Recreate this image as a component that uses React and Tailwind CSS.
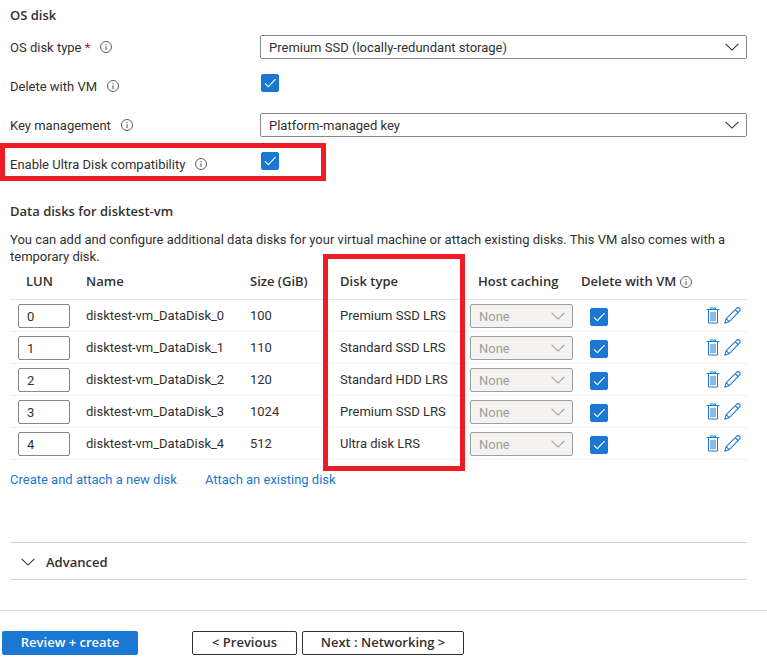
import { useState } from "react";
import { clsx } from "clsx";

const initialDisks = [
  { lun: 0, name: "disktest-vm_DataDisk_0", size: 100, type: "Premium SSD LRS" },
  { lun: 1, name: "disktest-vm_DataDisk_1", size: 110, type: "Standard SSD LRS" },
  { lun: 2, name: "disktest-vm_DataDisk_2", size: 120, type: "Standard HDD LRS" },
  { lun: 3, name: "disktest-vm_DataDisk_3", size: 1024, type: "Premium SSD LRS" },
  { lun: 4, name: "disktest-vm_DataDisk_4", size: 512, type: "Ultra disk LRS" },
];

const InfoIcon = () => (
  <svg viewBox="0 0 12 12" className="w-3 h-3 shrink-0 text-[#605e5c]" fill="none" stroke="currentColor">
    <circle cx="6" cy="6" r="5.5" strokeWidth="1" />
    <path d="M6 5.2v3.8M6 3v1.2" strokeWidth="1.1" />
  </svg>
);

const ChevronIcon = ({ className }) => (
  <svg viewBox="0 0 14 8" className={clsx("w-3.5 h-2", className)} fill="none" stroke="currentColor" strokeWidth="1.1">
    <path d="M0.6 0.8 7 7.1 13.4 0.8" />
  </svg>
);

const TrashIcon = () => (
  <svg viewBox="0 0 14 17" className="w-3.5 h-[17px]" fill="none" stroke="#1a7ad4">
    <path d="M0.5 2.5h13" strokeWidth="1" />
    <path d="M4.5 2.5V1h5v1.5" strokeWidth="1" />
    <path d="M2.5 3v13h9V3" strokeWidth="1" />
    <rect x="4" y="5" width="6" height="9" fill="#8ebbe9" stroke="none" />
  </svg>
);

const PencilIcon = () => (
  <svg viewBox="0 0 17 17" className="w-[17px] h-[17px]" fill="none" stroke="#1a7ad4" strokeWidth="1.1" strokeLinejoin="round">
    <path d="M0.8 16.2 2.2 11.6 12.6 1.3a1.9 1.9 0 0 1 2.9 0 1.9 1.9 0 0 1 0 2.9L5.2 14.6Z" />
    <path d="M11.3 2.6 14.2 5.5M2.2 11.6 5.2 14.6" />
  </svg>
);

const Checkbox = ({ className, ...props }) => (
  <span className={clsx("grid w-[18px] h-[18px]", className)}>
    <input
      type="checkbox"
      defaultChecked
      className="peer col-start-1 row-start-1 appearance-none w-[18px] h-[18px] rounded-xs border border-[#1a78d2] checked:bg-[#1a78d2]"
      {...props}
    />
    <svg
      viewBox="0 0 18 18"
      className="col-start-1 row-start-1 w-[18px] h-[18px] pointer-events-none invisible peer-checked:visible"
      fill="none"
      stroke="white"
      strokeWidth="1.1"
    >
      <path d="M4 9.3 7.4 12.6 14.5 5.2" />
    </svg>
  </span>
);

const Select = ({ options, className, chevronClass, ...props }) => (
  <div className="grid items-center">
    <select
      className={clsx(
        "col-start-1 row-start-1 appearance-none w-full h-6 px-2 pt-px rounded-xs border leading-5",
        className
      )}
      {...props}
    >
      {options.map((option) => (
        <option key={option}>{option}</option>
      ))}
    </select>
    <ChevronIcon
      className={clsx("col-start-1 row-start-1 justify-self-end mr-2 pointer-events-none", chevronClass)}
    />
  </div>
);

const Field = ({ id, label, required, children }) => (
  <div className="grid grid-cols-[250px_1fr] items-center h-6">
    <div className="flex items-center gap-2.5">
      <label htmlFor={id}>
        {label}
        {required && <span className="text-[#a4262c]"> *</span>}
      </label>
      <InfoIcon />
    </div>
    {children}
  </div>
);

const heading = "font-semibold font-['Open_Sans','Noto_Sans',sans-serif]";

const App = () => {
  const [disks, setDisks] = useState(initialDisks);

  const removeDisk = (name) => {
    setDisks((prev) => prev.filter((disk) => disk.name !== name));
  };

  return (
    <div className="bg-white text-[#323130] text-[13px] leading-[17px] font-[Roboto,'Open_Sans',sans-serif]">
      <main className="pl-2.5 pr-5 pt-[7px]">
        <section>
          <h2 className={heading}>OS disk</h2>
          <div className="mt-[11px] flex flex-col gap-[15px]">
            <Field id="os-disk-type" label="OS disk type" required>
              <Select
                id="os-disk-type"
                options={["Premium SSD (locally-redundant storage)"]}
                className="border-[#8a8886] bg-white"
              />
            </Field>
            <Field id="delete-with-vm" label="Delete with VM">
              <Checkbox id="delete-with-vm" className="ml-px mb-1.5" />
            </Field>
            <Field id="key-management" label="Key management">
              <Select
                id="key-management"
                options={["Platform-managed key"]}
                className="border-[#8a8886] bg-white"
              />
            </Field>
            <div className="relative">
              <Field id="ultra-disk" label="Enable Ultra Disk compatibility">
                <Checkbox id="ultra-disk" className="ml-px mb-1.5" />
              </Field>
              <div className="absolute -left-2.5 -top-[9px] w-[326px] h-[38px] border-[5px] border-[#ee1c25] pointer-events-none" />
            </div>
          </div>
        </section>

        <section className="mt-[27px]">
          <h2 className={heading}>Data disks for disktest-vm</h2>
          <p className="mt-[11px]">
            You can add and configure additional data disks for your virtual machine or attach existing
            disks. This VM also comes with a temporary disk.
          </p>

          <div className="relative">
            <table className="w-full table-fixed text-left">
              <thead className={heading}>
                <tr className="h-[34px] border-b border-[#e6e5e4]">
                  <th className="w-[68px] pl-4 font-semibold">LUN</th>
                  <th className="w-[164px] px-2 font-semibold">Name</th>
                  <th className="w-[90px] px-2 font-semibold">Size (GiB)</th>
                  <th className="w-[138px] px-2 font-semibold">Disk type</th>
                  <th className="w-[103px] px-2 font-semibold">Host caching</th>
                  <th className="w-[124px] pl-2 font-semibold whitespace-nowrap">
                    <span className="flex items-center gap-1">
                      Delete with VM
                      <InfoIcon />
                    </span>
                  </th>
                  <th aria-label="Actions" />
                </tr>
              </thead>
              <tbody>
                {disks.map((disk) => (
                  <tr key={disk.name} className="h-8 border-b border-[#f0efee]">
                    <td className="pl-2 pt-0.5">
                      <input
                        type="text"
                        aria-label={`LUN of ${disk.name}`}
                        defaultValue={disk.lun}
                        className="block w-[52px] h-6 px-2 rounded-xs border border-[#8a8886]"
                      />
                    </td>
                    <td className="px-2 whitespace-nowrap">{disk.name}</td>
                    <td className="px-2">{disk.size}</td>
                    <td className="px-2 whitespace-nowrap">{disk.type}</td>
                    <td className="pt-0.5">
                      <Select
                        aria-label={`Host caching of ${disk.name}`}
                        options={["None"]}
                        disabled
                        className="border-[#a19f9d] bg-[#f3f2f1] text-[#a19f9d] opacity-100"
                        chevronClass="text-[#a19f9d]"
                      />
                    </td>
                    <td className="pl-[17px]">
                      <Checkbox aria-label={`Delete ${disk.name} with VM`} className="mt-[3px]" />
                    </td>
                    <td>
                      <div className="flex justify-end gap-1 pr-1.5">
                        <button
                          type="button"
                          aria-label={`Remove ${disk.name}`}
                          onClick={() => removeDisk(disk.name)}
                        >
                          <TrashIcon />
                        </button>
                        <button type="button" aria-label={`Edit ${disk.name}`}>
                          <PencilIcon />
                        </button>
                      </div>
                    </td>
                  </tr>
                ))}
              </tbody>
            </table>
            {/* frame round the disk type column */}
            <div className="absolute left-[313px] -top-[11px] -bottom-[11px] w-[142px] border-[5px] border-[#ee1c25] pointer-events-none" />
          </div>

          <div className="mt-[11px] flex gap-7 text-[#1a78d2]">
            <a href="#create">Create and attach a new disk</a>
            <a href="#attach">Attach an existing disk</a>
          </div>
        </section>

        <section className="mt-[54px] border-y border-[#d2d0ce]">
          <button type="button" className={clsx("flex items-center gap-[11px] w-full h-9 pt-[3px] pl-[11px]", heading)}>
            <ChevronIcon />
            Advanced
          </button>
        </section>
      </main>

      <footer
        className={clsx("mt-[30px] border-t border-[#dddcdb] pt-5 pb-[7px] pl-0.5 flex", heading)}
      >
        <button type="button" className="w-[136px] h-6 rounded-xs bg-[#1a78d2] text-white">
          Review + create
        </button>
        <button type="button" className="ml-[54px] w-[105px] h-6 rounded-xs border border-[#323130]">
          &lt; Previous
        </button>
        <button type="button" className="ml-[5px] w-[162px] h-6 rounded-xs border border-[#323130]">
          Next : Networking &gt;
        </button>
      </footer>
    </div>
  );
};

export default App;
